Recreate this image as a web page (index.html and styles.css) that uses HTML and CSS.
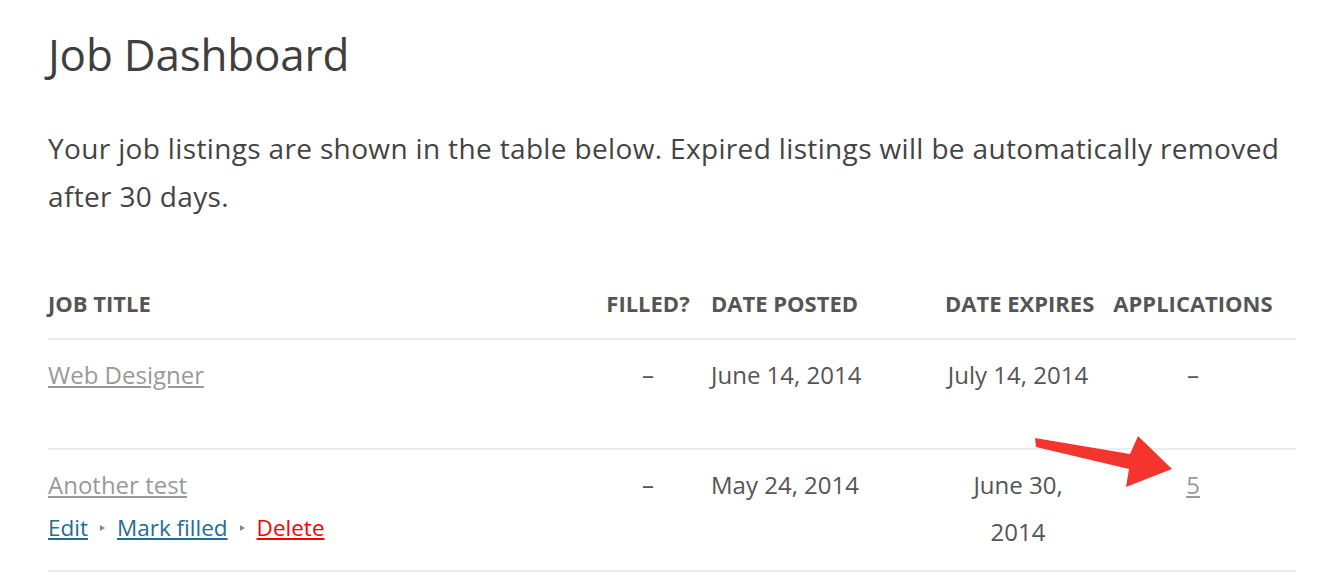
FILE: index.html
```html
<!DOCTYPE html>
<html>
<head>
<meta charset="utf-8">
<link rel="stylesheet" href="styles.css">
</head>
<body>
<main class="page">
  <h1 class="title">Job Dashboard</h1>
  <p class="intro">Your job listings are shown in the table below. Expired listings will be automatically removed after 30 days.</p>
  <table class="jobs">
    <colgroup>
      <col class="c-title"><col class="c-filled"><col class="c-posted"><col class="c-expires"><col class="c-apps">
    </colgroup>
    <thead>
      <tr>
        <th class="col-title">Job Title</th>
        <th class="col-filled">Filled?</th>
        <th class="col-posted">Date Posted</th>
        <th class="col-expires">Date Expires</th>
        <th class="col-apps">Applications</th>
      </tr>
    </thead>
    <tbody>
      <tr class="row-plain">
        <td class="col-title"><a class="job-link" href="#">Web Designer</a></td>
        <td class="col-filled">–</td>
        <td class="col-posted">June 14, 2014</td>
        <td class="col-expires">July 14, 2014</td>
        <td class="col-apps">–</td>
      </tr>
      <tr>
        <td class="col-title">
          <a class="job-link" href="#">Another test</a>
          <ul class="actions">
            <li><a class="act" href="#">Edit</a></li>
            <li class="sep"></li>
            <li><a class="act" href="#">Mark filled</a></li>
            <li class="sep"></li>
            <li><a class="act delete" href="#">Delete</a></li>
          </ul>
        </td>
        <td class="col-filled">–</td>
        <td class="col-posted">May 24, 2014</td>
        <td class="col-expires">June 30, 2014</td>
        <td class="col-apps"><a class="job-link" href="#">5</a></td>
      </tr>
    </tbody>
  </table>
</main>
<svg class="arrow" width="1340" height="588" viewBox="0 0 1340 588" aria-hidden="true">
  <polygon points="1035,438 1130,454 1138,436 1172,469 1126,487 1129,469 1036,447" fill="#f4352e"/>
</svg>
</body>
</html>
```
FILE: styles.css
```css
html, body {
  margin: 0;
  padding: 0;
  background: #fff;
}
body {
  font-family: "Open Sans", "Liberation Sans", sans-serif;
  color: #454545;
  position: relative;
  width: 1340px;
  height: 588px;
  overflow: hidden;
}
.page {
  padding: 24px 44px 0 48px;
}
.title {
  margin: 0;
  font-weight: 400;
  font-size: 44px;
  line-height: 60px;
  letter-spacing: -0.2px;
  color: #3f3f3f;
}
.intro {
  margin: 40px 0 0;
  font-size: 28px;
  line-height: 48px;
  letter-spacing: 0.35px;
  color: #444;
}
.jobs {
  margin-top: 68px;
  width: 1248px;
  border-collapse: collapse;
  table-layout: fixed;
}
.c-title { width: 548px; }
.c-filled { width: 104px; }
.c-posted { width: 240px; }
.c-expires { width: 156px; }
.c-apps { width: 200px; }
.jobs th {
  font-size: 22px;
  font-weight: 700;
  text-transform: uppercase;
  color: #555;
  white-space: nowrap;
  padding: 0 0 20px;
  line-height: 30px;
  letter-spacing: 0;
  border-bottom: 2px solid #ececec;
}
.jobs td {
  font-size: 24px;
  line-height: 47px;
  color: #555;
  vertical-align: top;
  padding: 11px 0 15px;
  border-bottom: 2px solid #ececec;
  letter-spacing: 0;
}
.row-plain td { padding-bottom: 50px; }
.col-title { text-align: left; }
.col-filled, .col-expires, .col-apps { text-align: center; }
.col-posted { text-align: left; padding-left: 11px !important; }
.col-expires { padding-left: 5px !important; padding-right: 5px !important; }
.col-apps { padding-right: 6px !important; }
.job-link {
  color: #999;
  text-decoration: underline;
}
.actions {
  list-style: none;
  margin: 0;
  padding: 0;
  display: flex;
  align-items: center;
  gap: 12px;
  font-size: 22.5px;
  line-height: 40px;
}
.act {
  color: #1e6e96;
  text-decoration: underline;
}
.act.delete { color: #f00; }
.sep {
  width: 0;
  height: 0;
  border-left: 5px solid #888;
  border-top: 3.5px solid transparent;
  border-bottom: 3.5px solid transparent;
}
.arrow {
  position: absolute;
  left: 0;
  top: 0;
  pointer-events: none;
}
```
